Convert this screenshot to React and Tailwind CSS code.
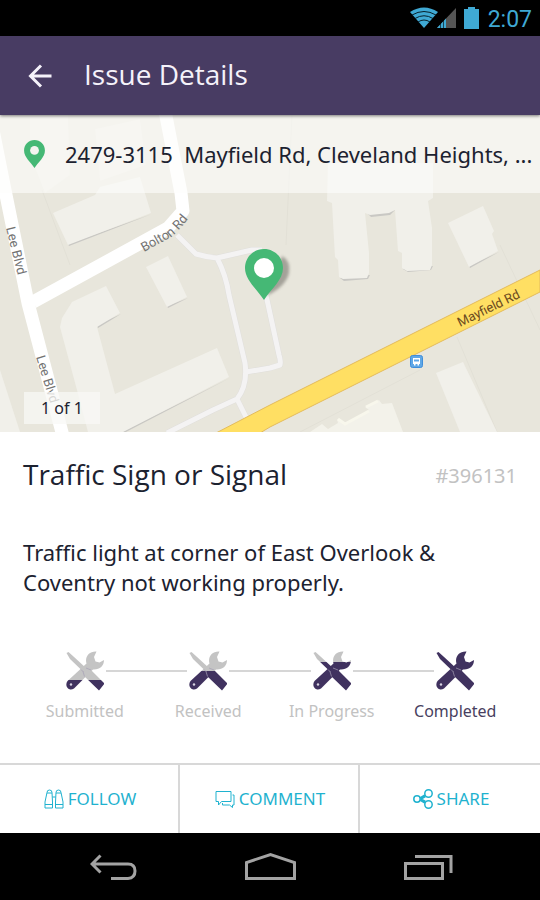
import React from 'react';

const STEPS = [
  { id: 'submitted', label: 'Submitted', split: 29 },
  { id: 'received', label: 'Received', split: 20 },
  { id: 'progress', label: 'In Progress', split: 11 },
  { id: 'completed', label: 'Completed', split: 0, current: true },
];

const PIN_PATH = 'M19 0C8.500 0 0 8.200 0 19c0 12 11.500 20.500 19 32 7.500-11.500 19-20 19-32C38 8.200 29.500 0 19 0z';

const StatusBar = () => (
  <div className="flex h-9 items-center justify-end bg-black pr-2 text-[#3fa9d4]">
    <svg className="h-[22px] w-[47px]" viewBox="0 0 47 22" aria-hidden="true">
      <path d="M0 5Q14-4 28 5L14 21z" fill="#3fa9d4" />
      <path d="M2 8Q14 1 26 8M5 11.500Q14 6 23 11.500M8 15Q14 11 20 15" fill="none" stroke="#06202b" strokeWidth="1" />
      <path d="M46 1v20H27z" fill="#555" />
      <path d="M36 11.500V21h-9z" fill="#3fa9d4" />
      <path d="M30.500 16v5M33.500 13v8" stroke="#000" strokeWidth="0.600" />
    </svg>
    <svg className="ml-[7px] h-[22px] w-4" viewBox="0 0 16 22" aria-hidden="true">
      <path d="M4 0h7v2h4v20H0V2h4z" fill="#3fa9d4" />
    </svg>
    <span className="ml-2 pt-1 font-['Roboto',sans-serif] text-[23px] leading-8">2:07</span>
  </div>
);

const Header = () => (
  <header className="relative z-10 flex h-[79px] items-center bg-[#483c63] pl-7 text-[#f5f2fa] shadow-[0_1px_3px_rgba(0,0,0,0.5)]">
    <button type="button" aria-label="Back" className="mr-8">
      <svg className="h-6 w-6" viewBox="0 0 24 24" fill="none" stroke="currentColor" strokeWidth="3">
        <path d="M23.500 12H3M13 1.500L2.500 12 13 22.500" />
      </svg>
    </button>
    <h1 className="pb-1 font-['Open_Sans',sans-serif] text-[28px] leading-8">Issue Details</h1>
  </header>
);

const MapDrawing = () => (
  <svg className="h-full w-full" viewBox="0 0 540 317" preserveAspectRatio="xMidYMid slice">
    <defs>
      <path id="boltonLine" d="M144 137L171 122Q178 117 192 99" />
      <filter id="pinBlur"><feGaussianBlur stdDeviation="1.500" /></filter>
    </defs>
    <rect width="540" height="317" fill="#e8e6dc" />

    {/* lots */}
    <g fill="none" stroke="#e2e0d6" strokeWidth="1">
      <path d="M42 75L70 150M292 0L286 130M457 222L497 317M540 215L500 130M300 317L420 255" />
    </g>

    {/* buildings */}
    <g fill="#c9c8c4" transform="translate(1 1)">
      <path d="M120 198L97 212L96 209zM229 262L123 317L121 316z" />
      <path d="M187 182L167 192L166 190zM151 98L68 130L67 128z" />
      <path d="M339 162L343 165 367 163 369 159zM402 153L407 156 430 154 432 150zM370 101L389 99 394 94 366 97zM498 136L469 152 468 150z" />
    </g>
    <g fill="#f1f0ea">
      <path d="M30 0H68L70 60 45 78 30 40zM95 14L140 4 146 50 100 66z" opacity="0.500" />
      <path d="M53 98L95 80 100 72 140 62 151 98 68 130z" />
      <path d="M146 152L168 141 187 182 167 192z" />
      <path d="M72 187L106 171 120 198 97 212 115 279 217 233 229 262 123 317H88L77 275 60 212 62 203z" />
      <path d="M0 255L20 317H0z" />
      <path d="M328 48H433V83L428 86 432 113V128L432 150 430 155 407 156 402 153 402 138 398 136 395 95 389 98 370 100 365 98 369 138V158L367 163 343 164 339 162 338 145 335 142 332 88 327 86z" />
      <path d="M448 108L483 91 494 116 492 119 498 136 469 152z" />
      <path d="M436 258L463 247 497 317H460z" />
    </g>
    <path d="M310 317L322 309 328 314 338 308 337 304 344 309 369 295 365 292 379 285 382 289 392 288 403 317z" fill="#f3f2ea" />
    <path d="M338 304L345 309 369 296M366 292L378 286" fill="none" stroke="#f8f7ec" strokeWidth="3" />

    {/* footpaths */}
    <g fill="none" stroke="#e0dfdc" strokeWidth="6" strokeLinejoin="round">
      <path d="M177 120L196 139Q206 142 217 143L252 135H262M217 143Q226 160 229 180L245 248Q248 270 237 284L213 295 167 318M237 284L247 304M246 257L270 253 280 250Q281 246 279 240L266 180" />
    </g>
    <g fill="none" stroke="#f4f3f3" strokeWidth="5" strokeLinejoin="round">
      <path d="M177 120L196 139Q206 142 217 143L252 135H262M217 143Q226 160 229 180L245 248Q248 270 237 284L213 295 167 318M237 284L247 304M246 257L270 253 280 250Q281 246 279 240L266 180" />
    </g>

    {/* streets */}
    <g fill="none" stroke="#fff" strokeWidth="13" strokeLinejoin="round">
      <path d="M-8 10L5 75 28 188 64 325" />
      <path d="M165 -4L181 78 183 96 168 113 33 187" />
    </g>
    <path d="M216 318L270 290 540 155V177L270 312 260 318z" fill="#ffdf63" stroke="#e3bb5c" strokeWidth="1" />

    <g fontFamily="Roboto, sans-serif" fontSize="13" fill="#737373">
      <text transform="translate(6 113) rotate(76)">Lee Blvd</text>
      <text transform="translate(36 242) rotate(73)">Lee Blvd</text>
      <text><textPath href="#boltonLine">Bolton Rd</textPath></text>
      <text transform="translate(460 212) rotate(-26)" fill="#6b4a20">Mayfield Rd</text>
    </g>

    {/* bus stop */}
    <rect x="410.500" y="240.500" width="12" height="12" rx="2" fill="#5ea7e6" stroke="#3f8edb" />
    <path d="M413 243h7v6h-1v1.500h-1.500V249h-2v1.500H414V249h-1z" fill="#fff" />
    <path d="M414 244.500h5v2h-5z" fill="#5ea7e6" />

    <path d="M266 183L282 141Q291 146 289 158 286 171 268 180z" fill="#77756d" opacity="0.600" filter="url(#pinBlur)" />
    <g transform="translate(245 134)">
      <path d={PIN_PATH} fill="#45b875" />
      <circle cx="19" cy="19" r="10" fill="#fff" />
    </g>
  </svg>
);

const LocationMap = () => (
  <section className="relative h-[317px] overflow-hidden">
    <MapDrawing />
    <div className="absolute inset-x-0 top-0 flex h-[78px] items-center bg-[#fdfdfb]/60 pl-6">
      <svg className="mr-5 h-7 w-[21px] shrink-0" viewBox="0 0 38 51" aria-hidden="true">
        <path d={PIN_PATH} fill="#45b875" />
        <circle cx="19" cy="19" r="8" fill="#f4f4f0" />
      </svg>
      <p className="whitespace-nowrap text-[22px] leading-8">2479-3115&nbsp; Mayfield Rd, Cleveland Heights, ...</p>
    </div>
    <div className="absolute bottom-2 left-6 bg-[#f8f8f5]/75 px-[17px] text-base leading-8">1 of 1</div>
  </section>
);

// Tool icon that fills up with purple from the bottom as the issue moves along
const ToolsIcon = ({ id, split }) => (
  <svg className="h-10 w-[38px] shrink-0" viewBox="0 0 38 40" aria-hidden="true">
    <defs>
      <linearGradient id={`fill-${id}`} gradientUnits="userSpaceOnUse" x1="0" y1="0" x2="0" y2="40">
        <stop offset={split / 40} stopColor="#c4c4c4" />
        <stop offset={split / 40} stopColor="#40325f" />
      </linearGradient>
    </defs>
    <g fill={`url(#fill-${id})`}>
      <path d="M30.500 .5C23 0 18.500 6 20.500 12.500L1.500 30C-2 35 3 41 8 37.500L27 18.500C33.500 19 38 15 38 9L33.500 11.500 29.500 10.500 28 6z" />
      <path d="M.5 2L2.500 1 7.500 5.500 20 17 25 19 38.500 32.500 33 39.500 18.500 25.500 17 20.500 4 8z" />
    </g>
    <path d="M17 20.500L18.500 25.500M20 17L25 19M15 18.500L17.500 21" fill="none" stroke="#a59fb5" strokeWidth="0.700" />
    <circle cx="5" cy="33.500" r="1.200" fill="#d8d4e2" />
  </svg>
);

const Progress = () => (
  <ol className="mt-[54px] grid grid-cols-4 px-[23px]">
    {STEPS.map((step, i) => (
      <li key={step.id} className="flex flex-col items-center">
        <div className="flex w-full items-center gap-[2px]">
          <span className={i === 0 ? 'h-[2px] flex-1' : 'h-[2px] flex-1 bg-[#d6d6d6]'} />
          <ToolsIcon id={step.id} split={step.split} />
          <span className={i === STEPS.length - 1 ? 'h-[2px] flex-1' : 'h-[2px] flex-1 bg-[#d6d6d6]'} />
        </div>
        <span className={step.current ? 'mt-2 text-base leading-6 text-[#483f60]' : 'mt-2 text-base leading-6 text-[#c2c2c2]'}>
          {step.label}
        </span>
      </li>
    ))}
  </ol>
);

const FollowIcon = () => (
  <svg className="h-5 w-5" viewBox="0 0 20 20" fill="none" stroke="currentColor" strokeWidth="1">
    <path d="M1 19V13L3 3.500Q3 1 5.500 1T8 3.500L8.500 13V19zM11.500 19V13L12 3.500Q12 1 14.500 1T17 3.500L19 13V19zM1 15.500h7.500M11.500 15.500H19M3 4h5M12 4h5M8.500 8h3" />
  </svg>
);

const CommentIcon = () => (
  <svg className="h-5 w-5" viewBox="0 0 20 20" fill="none" stroke="currentColor" strokeWidth="1">
    <path d="M1 2.500h15v10H6.500L3.500 16v-3.500H1z" />
    <path d="M17.500 6H19v10h-1.500v2.500L14.500 16H7.500v-2" />
  </svg>
);

const ShareIcon = () => (
  <svg className="h-5 w-5" viewBox="0 0 20 20" fill="none" stroke="currentColor" strokeWidth="1.500">
    <circle cx="4" cy="10" r="3.200" />
    <circle cx="15.500" cy="4.500" r="3.700" />
    <circle cx="15.500" cy="15.500" r="3.700" />
    <path d="M7 9L12 6M7 11L12 14M8 10L12.500 7.500M8 10L12.500 12.500" />
  </svg>
);

const ACTIONS = [
  { label: 'FOLLOW', Icon: FollowIcon },
  { label: 'COMMENT', Icon: CommentIcon },
  { label: 'SHARE', Icon: ShareIcon },
];

const ActionBar = () => (
  <div className="mt-10 grid grid-cols-3 divide-x-2 divide-[#d8d8d8] border-t-2 border-[#d8d8d8]">
    {ACTIONS.map(({ label, Icon }) => (
      <button key={label} type="button" className="flex h-[68px] items-center justify-center gap-1 pl-[2px] text-[17px] text-[#1fb2cf]">
        <Icon />
        {label}
      </button>
    ))}
  </div>
);

const NavBar = () => (
  <nav className="flex h-[67px] items-center justify-center gap-[108px] bg-black pl-[2px] text-[#a3a3a3]">
    <button type="button" aria-label="System back">
      <svg className="h-[29px] w-[47px]" viewBox="0 0 47 29" fill="none" stroke="currentColor" strokeWidth="3">
        <path d="M2 12H38Q45 12 45 19T38 26.500H21M10.500 3.500L2 12 10.500 20.500" />
      </svg>
    </button>
    <button type="button" aria-label="Home">
      <svg className="h-[29px] w-[51px]" viewBox="0 0 51 29" fill="none" stroke="currentColor" strokeWidth="3">
        <path d="M1.500 26.500V10.500L25.500 2.500 49.500 10.500V26.500z" />
      </svg>
    </button>
    <button type="button" aria-label="Recent apps">
      <svg className="h-[29px] w-[49px]" viewBox="0 0 49 29" fill="none" stroke="currentColor" strokeWidth="3">
        <path d="M1.500 11.500H38.500V26.500H1.500zM11 4.500H47V21" />
      </svg>
    </button>
  </nav>
);

export default function App() {
  return (
    <div className="bg-white font-['Noto_Sans',sans-serif] text-[#1c2230]">
      <StatusBar />
      <Header />
      <LocationMap />
      <main>
        <div className="flex items-center justify-between px-[23px] pt-6">
          <h2 className="font-['Open_Sans',sans-serif] text-[28px] leading-9">Traffic Sign or Signal</h2>
          <span className="pt-1 text-[20px] leading-8 text-[#c2c2c2]">#396131</span>
        </div>
        <p className="mt-[45px] px-[23px] text-[22px] leading-[30px]">
          Traffic light at corner of East Overlook &amp; Coventry not working properly.
        </p>
        <Progress />
      </main>
      <ActionBar />
      <NavBar />
    </div>
  );
}
